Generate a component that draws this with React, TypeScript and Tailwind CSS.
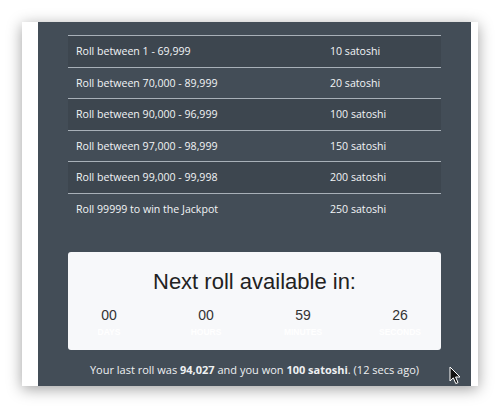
const rows = [
  ["Roll between 1 - 69,999", "10 satoshi"],
  ["Roll between 70,000 - 89,999", "20 satoshi"],
  ["Roll between 90,000 - 96,999", "100 satoshi"],
  ["Roll between 97,000 - 98,999", "150 satoshi"],
  ["Roll between 99,000 - 99,998", "200 satoshi"],
  ["Roll 99999 to win the Jackpot", "250 satoshi"],
];

const timer = [
  ["00", "Days"],
  ["00", "Hours"],
  ["59", "Minutes"],
  ["26", "Seconds"],
];

function Cursor() {
  return (
    <svg className="absolute left-[449px] top-[366px]" width="12" height="19" viewBox="0 0 12 19">
      <path d="M1 1 L1 15 L4.3 11.8 L6.8 17.6 L9 16.6 L6.6 11 L11 11 Z" fill="#111" stroke="#fff" strokeWidth="1" />
    </svg>
  );
}

export default function App() {
  return (
    <div className="relative w-[500px] h-[409px] bg-white pt-[22px] pl-[22px] overflow-hidden">
      <div className="flex w-[456px] h-[364px] bg-white pl-[16px] pr-[7px] shadow-[0_3px_14px_rgba(0,0,0,0.38)]">
        <div
          className="flex-1 bg-[#434d57] px-[30px] pt-[13px] text-[#eef0f2]"
          style={{ fontFamily: '"Open Sans", "Liberation Sans", sans-serif' }}
        >
          <div className="text-[10.6px] text-[#f2f4f6]">
            {rows.map(([a, b], i) => (
              <div
                key={a}
                className={`grid grid-cols-[254px_1fr] border-t border-[#a8b0b8] py-2 leading-[14.6px] ${
                  i % 2 === 0 ? "bg-[#3d464f]" : ""
                }`}
              >
                <div className="pl-2">{a}</div>
                <div className="pl-2">{b}</div>
              </div>
            ))}
          </div>

          <div
            className="mt-[27px] h-[98px] rounded-[3px] bg-[#f7f8fa] pt-[17px] text-center"
            style={{ fontFamily: '"Liberation Sans", Arial, sans-serif' }}
          >
            <div className="text-[22px] leading-[25px] text-[#222]">Next roll available in:</div>
            <div className="mt-[13px] flex gap-[57px] pl-[21px]">
              {timer.map(([n, l]) => (
                <div key={l} className="w-[40px] flex flex-col items-center">
                  <div className="text-[14px] leading-[16px] text-[#333]">{n}</div>
                  <div className="mt-[4px] text-[8.5px] leading-[10px] font-bold uppercase text-white">{l}</div>
                </div>
              ))}
            </div>
          </div>

          <div className="mt-[12px] text-center text-[11px] leading-[15px]">
            Your last roll was <b>94,027</b> and you won <b>100 satoshi</b>. (12 secs ago)
          </div>
        </div>
      </div>
      <Cursor />
    </div>
  );
}
